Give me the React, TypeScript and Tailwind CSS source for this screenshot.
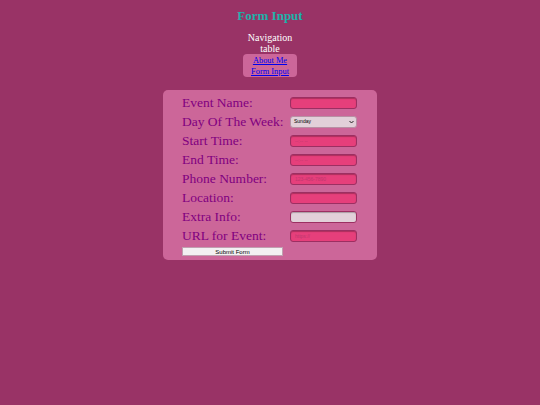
import React from "react";

const serif = { fontFamily: '"Liberation Serif", "Times New Roman", serif' };

function PinkInput({ placeholder, light }: { placeholder?: string; light?: boolean }) {
  return (
    <input
      type="text"
      placeholder={placeholder}
      className={
        "w-[67px] h-[12px] rounded-[3px] border border-[#9c2f62] px-[4px] text-[5px] outline-none shadow-[inset_0_1px_1px_rgba(0,0,0,0.25)] " +
        (light
          ? "bg-[#e2d0d9] placeholder:text-[#b08898]"
          : "bg-[#e63f7b] placeholder:text-[#c0386f]")
      }
      style={{ fontFamily: '"Liberation Sans", Arial, sans-serif' }}
    />
  );
}

function Row({ label, children }: { label: string; children: React.ReactNode }) {
  return (
    <>
      <div className="h-[19px] flex items-center text-[13.5px] leading-none text-[#800080] whitespace-nowrap" style={serif}>
        {label}
      </div>
      <div className="h-[19px] flex items-center">{children}</div>
    </>
  );
}

export default function App() {
  return (
    <div className="w-[540px] h-[405px] bg-[#993366] flex flex-col items-center" style={serif}>
      <div className="mt-[8px] h-[15px] leading-[15px] text-[13px] font-bold text-[#20b2aa]">Form Input</div>
      <div className="mt-[9px] w-[54px] flex flex-col items-center">
        <div className="text-[10px] leading-[11px] text-white text-center">
          Navigation
          <br />
          table
        </div>
        <div className="w-[54px] h-[23px] rounded-[4px] bg-[#cc6699] flex flex-col items-center justify-center text-[8.4px] leading-[11px]">
          <a href="#" className="text-[#0000ee] underline">About Me</a>
          <a href="#" className="text-[#0000ee] underline">Form Input</a>
        </div>
      </div>
      <div className="mt-[13px] w-[214px] rounded-[5px] bg-[#cc6699] pl-[19px] pr-[20px] pt-[3px] pb-[4px]">
        <div className="grid grid-cols-[108px_67px]">
          <Row label="Event Name:">
            <PinkInput />
          </Row>
          <Row label="Day Of The Week:">
            <div className="relative w-[67px] h-[12px] rounded-[3px] bg-[#e2d0d9] border border-[#b890a4] flex items-center pl-[3px]">
              <span className="text-[5px] text-black" style={{ fontFamily: '"Liberation Sans", Arial, sans-serif' }}>Sunday</span>
              <svg className="absolute right-[2px] top-[3px]" width="5" height="4" viewBox="0 0 10 8">
                <path d="M1 2 L5 6 L9 2" stroke="#222" strokeWidth="2" fill="none" />
              </svg>
            </div>
          </Row>
          <Row label="Start Time:">
            <PinkInput placeholder="--:-- --" />
          </Row>
          <Row label="End Time:">
            <PinkInput placeholder="--:-- --" />
          </Row>
          <Row label="Phone Number:">
            <PinkInput placeholder="123-456-7890" />
          </Row>
          <Row label="Location:">
            <PinkInput />
          </Row>
          <Row label="Extra Info:">
            <PinkInput light />
          </Row>
          <Row label="URL for Event:">
            <PinkInput placeholder="https://" />
          </Row>
        </div>
        <button
          className="mt-[2px] w-[101px] h-[9px] bg-[#f3f0f2] border border-[#c0a0b0] text-[6px] leading-none text-black flex items-center justify-center"
          style={{ fontFamily: '"Liberation Sans", Arial, sans-serif' }}
        >
          Submit Form
        </button>
      </div>
    </div>
  );
}
